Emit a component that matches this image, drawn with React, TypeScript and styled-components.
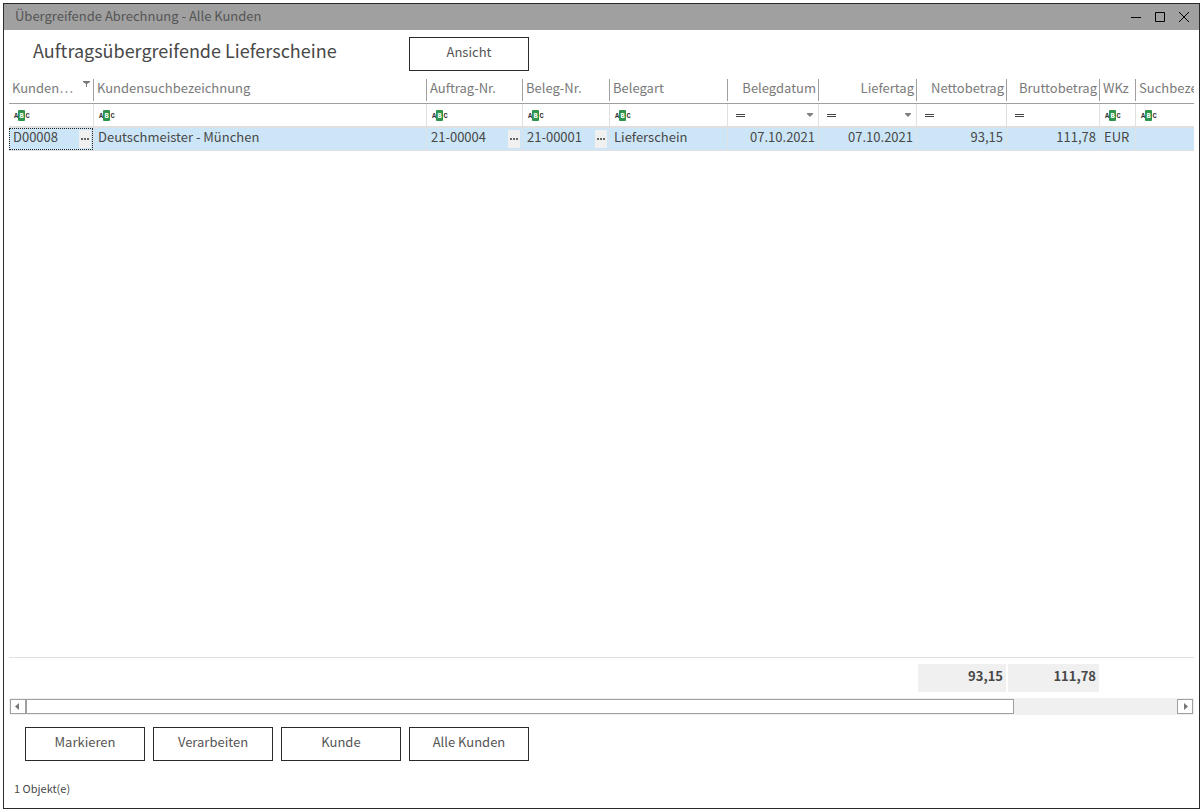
import React from "react";
import styled, { createGlobalStyle, css } from "styled-components";

const GlobalStyle = createGlobalStyle`
  * { box-sizing: border-box; }
  body {
    margin: 0;
    background: #ffffff;
    color: #484848;
    font-family: "Noto Sans CJK SC", "Liberation Sans", sans-serif;
    font-size: 13px;
    line-height: 18px;
  }
  button, input { font: inherit; color: inherit; border-radius: 0; }
  #root { display: flex; min-height: 100vh; }
`;

const Window = styled.main`
  flex: 1;
  min-width: 0;
  display: flex;
  flex-direction: column;
  margin: 3px 4px 3px 3px;
  border: 1px solid #2b2b2b;
`;

const TitleBar = styled.header`
  display: flex;
  justify-content: space-between;
  height: 26px;
  padding: 0 3px 0 11px;
  background: #a0a0a0;
  color: #555555;
  line-height: 24px;
`;

const WindowControls = styled.div`
  display: flex;
`;

const ControlButton = styled.button`
  display: grid;
  place-items: center;
  width: 24px;
  height: 26px;
  padding: 0;
  border: 0;
  background: transparent;
  color: #000000;
`;

const Toolbar = styled.div`
  display: flex;
  align-items: flex-start;
  padding: 7px 5px 8px 29px;
`;

const Heading = styled.h1`
  width: 376px;
  margin: 0;
  font-size: 18px;
  font-weight: 400;
  line-height: 26px;
`;

const ActionButton = styled.button`
  width: 120px;
  height: 34px;
  padding: 0 0 4px;
  border: 1px solid #2b2b2b;
  background: #ffffff;
  color: #555555;
`;

const GridArea = styled.section`
  flex: 1;
  display: flex;
  flex-direction: column;
  min-width: 0;
  margin: 0 5px;
`;

const GridBody = styled.div`
  flex: 1;
  overflow: hidden;
  border-bottom: 1px solid #e0e0e0;
`;

const Table = styled.table`
  width: 100%;
  table-layout: fixed;
  border-collapse: separate;
  border-spacing: 0;
`;

type Align = "left" | "right";

const HeadCell = styled.th`
  padding: 0 0 2px;
  border-bottom: 1px solid #a0a0a0;
  font-weight: 400;
  color: #7a7a7a;
`;

const HeadLabel = styled.div<{ $align: Align; $last: boolean }>`
  display: flex;
  justify-content: ${(p) => (p.$align === "right" ? "flex-end" : "space-between")};
  height: 22px;
  padding: 0 2px 0 3px;
  overflow: hidden;
  white-space: nowrap;
  border-right: ${(p) => (p.$last ? "0" : "1px solid #a0a0a0")};
`;

const HeadText = styled.span<{ $short: boolean }>`
  ${(p) =>
    p.$short &&
    css`
      overflow: hidden;
      text-overflow: ellipsis;
    `}
`;

const FilterCell = styled.td`
  height: 24px;
  padding: 0;
  border-right: 1px solid #e0e0e0;
  border-bottom: 2px solid #e0e0e0;
  &:last-child { border-right: 0; }
`;

const FilterBox = styled.div`
  display: flex;
  align-items: center;
  height: 22px;
  padding: 0 5px 0 4px;
`;

const FilterButton = styled.button`
  display: flex;
  flex: none;
  padding: 0;
  border: 0;
  background: transparent;
`;

const FilterInput = styled.input`
  flex: 1;
  min-width: 0;
  width: 0;
  height: 20px;
  padding: 0;
  border: 0;
  outline: 0;
  background: transparent;
`;

const DataCell = styled.td`
  padding: 0;
  background: #cde6f7;
  border-right: 1px solid #dfe3e6;
  border-bottom: 1px solid #e0e0e0;
  &:last-child { border-right: 0; }
`;

const DataBox = styled.div<{ $align: Align; $focused: boolean }>`
  display: flex;
  align-items: center;
  justify-content: ${(p) => (p.$align === "right" ? "flex-end" : "space-between")};
  height: 22px;
  padding: 0 1px 0 3px;
  border: 1px ${(p) => (p.$focused ? "dotted #222222" : "solid transparent")};
  white-space: nowrap;
`;

const DataText = styled.span`
  height: 22px;
`;

const NumberText = styled(DataText)`
  padding-right: 1px;
`;

const MoreButton = styled.button`
  display: grid;
  place-items: center;
  width: 12px;
  height: 18px;
  padding: 0;
  border: 0;
  background: #f0f0f0;
`;

const Totals = styled.div`
  padding: 6px 0;
  overflow: hidden;
`;

const TotalCell = styled.td`
  height: 28px;
  padding: 0 1px;
`;

const Total = styled.div`
  height: 28px;
  padding: 3px 3px 0 0;
  background: #f0f0f0;
  font-weight: 700;
  text-align: right;
`;

const ScrollBar = styled.div`
  display: flex;
  height: 17px;
  padding: 1px;
  background: #f0f0f0;
`;

const ScrollButton = styled.button`
  display: grid;
  place-items: center;
  width: 16px;
  padding: 0;
  border: 1px solid #a0a0a0;
  background: #ffffff;
`;

const ScrollTrack = styled.div`
  flex: 1;
  padding-right: 14%;
`;

const ScrollThumb = styled.div`
  height: 15px;
  margin-right: -3px;
  border: 1px solid #a0a0a0;
  background: #ffffff;
`;

const Actions = styled.div`
  display: flex;
  gap: 8px;
  padding: 12px 21px 0;
`;

const Status = styled.footer`
  padding: 18px 10px 11px;
  font-size: 11px;
`;

interface Column {
  label: string;
  width?: number;
  align: Align;
  filter: "text" | "number" | "date";
  value: string;
  more?: boolean;
  filtered?: boolean;
  total?: string;
}

const columns: Column[] = [
  { label: "Kundennummer", width: 85, align: "left", filter: "text", value: "D00008", more: true, filtered: true },
  { label: "Kundensuchbezeichnung", width: 333, align: "left", filter: "text", value: "Deutschmeister - München" },
  { label: "Auftrag-Nr.", width: 96, align: "left", filter: "text", value: "21-00004", more: true },
  { label: "Beleg-Nr.", width: 87, align: "left", filter: "text", value: "21-00001", more: true },
  { label: "Belegart", width: 118, align: "left", filter: "text", value: "Lieferschein" },
  { label: "Belegdatum", width: 91, align: "right", filter: "date", value: "07.10.2021" },
  { label: "Liefertag", width: 98, align: "right", filter: "date", value: "07.10.2021" },
  { label: "Nettobetrag", width: 90, align: "right", filter: "number", value: "93,15", total: "93,15" },
  { label: "Bruttobetrag", width: 93, align: "right", filter: "number", value: "111,78", total: "111,78" },
  { label: "WKz", width: 36, align: "left", filter: "text", value: "EUR" },
  { label: "Suchbezeichnung", align: "left", filter: "text", value: "" },
];

const IconLetter = styled.text`
  font-family: "Liberation Mono", monospace;
  font-size: 7px;
  font-weight: 700;
  text-anchor: middle;
`;

const ContainsIcon = () => (
  <svg width="17" height="12" viewBox="0 0 17 12" aria-hidden="true">
    <rect x="5" y="1" width="7" height="11" rx="1" fill="#2f944b" />
    <IconLetter x="3" y="9" fill="#333333">A</IconLetter>
    <IconLetter x="8.500" y="9" fill="#ffffff">B</IconLetter>
    <IconLetter x="14.500" y="9" fill="#333333">C</IconLetter>
  </svg>
);

const EqualsIcon = () => (
  <svg width="17" height="12" viewBox="0 0 17 12" aria-hidden="true">
    <path d="M4 5.500h9M4 7.500h9" stroke="#444444" />
  </svg>
);

const CaretIcon = () => (
  <svg width="6" height="4" viewBox="0 0 6 4" aria-hidden="true">
    <path d="M0 0h6v1L3 4L0 1z" fill="#808080" />
  </svg>
);

const FunnelIcon = () => (
  <svg width="8" height="9" viewBox="0 0 8 9" aria-hidden="true">
    <path d="M0 2h7v1L4 5v3H3V5L0 3z" fill="#777777" />
  </svg>
);

const DotsIcon = () => (
  <svg width="8" height="2" viewBox="0 0 8 2" aria-hidden="true">
    <path d="M0 0h2v2H0zM3 0h2v2H3zM6 0h2v2H6z" fill="#666666" />
  </svg>
);

const ArrowIcon = ({ d }: { d: string }) => (
  <svg width="6" height="7" viewBox="0 0 6 7" aria-hidden="true">
    <path d={d} fill="#777777" />
  </svg>
);

const ControlIcon = ({ d }: { d: string }) => (
  <svg width="10" height="10" viewBox="0 0 10 10" aria-hidden="true">
    <path d={d} fill="none" stroke="currentColor" />
  </svg>
);

const ColumnWidths = () => (
  <colgroup>
    {columns.map((c) => (
      <col key={c.label} width={c.width} />
    ))}
  </colgroup>
);

export default function App() {
  return (
    <>
      <GlobalStyle />
      <Window>
        <TitleBar>
          <span>Übergreifende Abrechnung - Alle Kunden</span>
          <WindowControls>
            <ControlButton aria-label="Minimieren">
              <ControlIcon d="M0 5.500h10" />
            </ControlButton>
            <ControlButton aria-label="Maximieren">
              <ControlIcon d="M.5.5h9v9h-9z" />
            </ControlButton>
            <ControlButton aria-label="Schließen">
              <ControlIcon d="M0 0l10 10M10 0L0 10" />
            </ControlButton>
          </WindowControls>
        </TitleBar>

        <Toolbar>
          <Heading>Auftragsübergreifende Lieferscheine</Heading>
          <ActionButton>Ansicht</ActionButton>
        </Toolbar>

        <GridArea>
          <GridBody>
            <Table>
              <ColumnWidths />
              <thead>
                <tr>
                  {columns.map((c, i) => (
                    <HeadCell key={c.label} scope="col">
                      <HeadLabel $align={c.align} $last={i === columns.length - 1}>
                        <HeadText $short={!!c.filtered}>{c.filtered ? "Kunden…" : c.label}</HeadText>
                        {c.filtered && <FunnelIcon />}
                      </HeadLabel>
                    </HeadCell>
                  ))}
                </tr>
              </thead>
              <tbody>
                <tr>
                  {columns.map((c) => (
                    <FilterCell key={c.label}>
                      <FilterBox>
                        <FilterButton aria-label={`Filterart ${c.label}`}>
                          {c.filter === "text" ? <ContainsIcon /> : <EqualsIcon />}
                        </FilterButton>
                        <FilterInput type="text" aria-label={`Filter ${c.label}`} />
                        {c.filter === "date" && (
                          <FilterButton aria-label={`Datum wählen ${c.label}`}>
                            <CaretIcon />
                          </FilterButton>
                        )}
                      </FilterBox>
                    </FilterCell>
                  ))}
                </tr>
                <tr>
                  {columns.map((c, i) => (
                    <DataCell key={c.label}>
                      <DataBox $align={c.align} $focused={i === 0}>
                        {c.align === "right" ? <NumberText>{c.value}</NumberText> : <DataText>{c.value}</DataText>}
                        {c.more && (
                          <MoreButton aria-label={`${c.label} öffnen`}>
                            <DotsIcon />
                          </MoreButton>
                        )}
                      </DataBox>
                    </DataCell>
                  ))}
                </tr>
              </tbody>
            </Table>
          </GridBody>

          <Totals>
            <Table aria-label="Summen">
              <ColumnWidths />
              <tbody>
                <tr>
                  {columns.map((c) => (
                    <TotalCell key={c.label}>{c.total && <Total>{c.total}</Total>}</TotalCell>
                  ))}
                </tr>
              </tbody>
            </Table>
          </Totals>

          <ScrollBar>
            <ScrollButton aria-label="Nach links">
              <ArrowIcon d="M4 0v7L0 3.500z" />
            </ScrollButton>
            <ScrollTrack>
              <ScrollThumb />
            </ScrollTrack>
            <ScrollButton aria-label="Nach rechts">
              <ArrowIcon d="M2 0v7l4-3.500z" />
            </ScrollButton>
          </ScrollBar>
        </GridArea>

        <Actions>
          <ActionButton>Markieren</ActionButton>
          <ActionButton>Verarbeiten</ActionButton>
          <ActionButton>Kunde</ActionButton>
          <ActionButton>Alle Kunden</ActionButton>
        </Actions>
        <Status>1 Objekt(e)</Status>
      </Window>
    </>
  );
}
